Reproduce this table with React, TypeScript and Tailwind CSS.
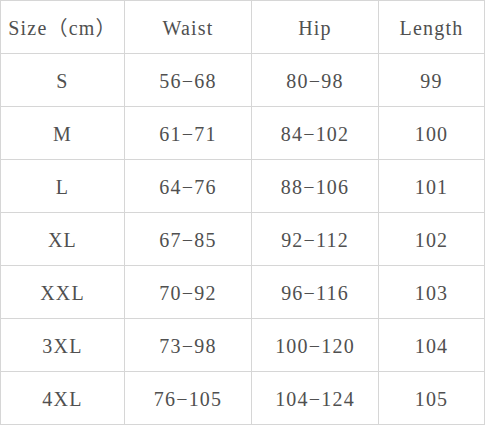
import React from 'react'

const HEADERS = ['Size（cm）', 'Waist', 'Hip', 'Length']

const ROWS: string[][] = [
  ['S', '56-68', '80-98', '99'],
  ['M', '61-71', '84-102', '100'],
  ['L', '64-76', '88-106', '101'],
  ['XL', '67-85', '92-112', '102'],
  ['XXL', '70-92', '96-116', '103'],
  ['3XL', '73-98', '100-120', '104'],
  ['4XL', '76-105', '104-124', '105'],
]

const Cell: React.FC<{ children: React.ReactNode }> = ({ children }) => (
  <div className="h-[53px] pt-[2px] flex items-center justify-center border-r border-b border-[#d6d6d6] whitespace-nowrap">
    {children}
  </div>
)

const App: React.FC = () => {
  return (
    <div className="w-[485px] h-[425px] bg-white">
      <div
        className="grid grid-cols-[124px_127px_127px_106px] border-t border-l border-[#d6d6d6] text-[20px] text-[#505050] tracking-[1.2px]"
        style={{ fontFamily: '"Liberation Serif", "Noto Sans CJK SC", serif' }}
      >
        {HEADERS.map((h) => (
          <Cell key={h}>{h}</Cell>
        ))}
        {ROWS.map((row) =>
          row.map((v, i) => <Cell key={row[0] + i}>{v.replace('-', '−')}</Cell>)
        )}
      </div>
    </div>
  )
}

export default App
